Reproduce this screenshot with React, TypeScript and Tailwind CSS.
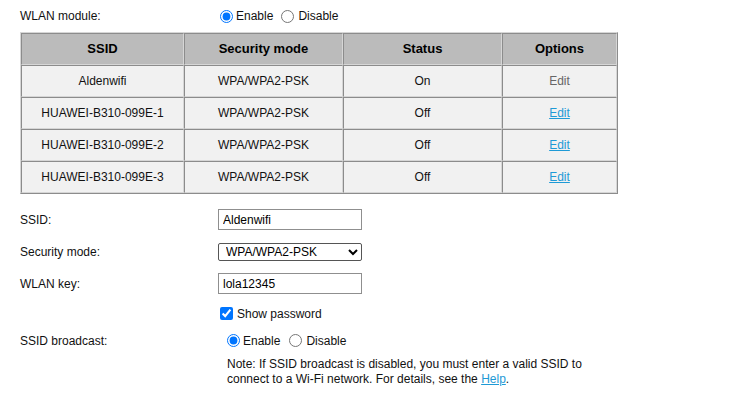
import React from "react";

const rows = [
  { ssid: "Aldenwifi", mode: "WPA/WPA2-PSK", status: "On", active: true },
  { ssid: "HUAWEI-B310-099E-1", mode: "WPA/WPA2-PSK", status: "Off", active: false },
  { ssid: "HUAWEI-B310-099E-2", mode: "WPA/WPA2-PSK", status: "Off", active: false },
  { ssid: "HUAWEI-B310-099E-3", mode: "WPA/WPA2-PSK", status: "Off", active: false },
];

const cell =
  "h-[32px] flex items-center justify-center border-t border-l border-t-[#8c8c8c] border-l-[#8c8c8c] border-r border-b border-r-[#d6d6d6] border-b-[#d6d6d6]";

export default function App() {
  return (
    <div
      className="w-[752px] h-[416px] bg-white text-[12px] text-[#111] overflow-hidden"
      style={{ fontFamily: '"Liberation Sans", Arial, sans-serif' }}
    >
      <div className="pl-[20px]">
        {/* WLAN module */}
        <div className="mt-[7px] h-[18px] flex items-center">
          <div className="w-[200px]">WLAN module:</div>
          <label className="flex items-center">
            <input type="radio" name="wlan" defaultChecked className="m-0 w-[13px] h-[13px] accent-[#0075ff]" />
            <span className="ml-[3px]">Enable</span>
          </label>
          <label className="flex items-center ml-[8px]">
            <input type="radio" name="wlan" className="m-0 w-[13px] h-[13px]" />
            <span className="ml-[4px]">Disable</span>
          </label>
        </div>

        {/* Table */}
        <div className="mt-[7px] inline-grid grid-cols-[163px_159px_159px_115px] border border-t-[#d6d6d6] border-l-[#d6d6d6] border-r-[#8c8c8c] border-b-[#8c8c8c]">
          {["SSID", "Security mode", "Status", "Options"].map((h) => (
            <div key={h} className={`${cell} bg-[#bbbbbb] font-bold text-[13px] text-black`}>
              {h}
            </div>
          ))}
          {rows.map((r) => (
            <React.Fragment key={r.ssid}>
              <div className={`${cell} bg-[#f1f1f1]`}>{r.ssid}</div>
              <div className={`${cell} bg-[#f1f1f1]`}>{r.mode}</div>
              <div className={`${cell} bg-[#f1f1f1]`}>{r.status}</div>
              <div className={`${cell} bg-[#f1f1f1]`}>
                {r.active ? (
                  <span className="text-[#666]">Edit</span>
                ) : (
                  <a href="#" className="text-[#1e9ad6] underline">
                    Edit
                  </a>
                )}
              </div>
            </React.Fragment>
          ))}
        </div>

        {/* SSID */}
        <div className="mt-[15px] h-[21px] flex items-center">
          <div className="w-[198px]">SSID:</div>
          <input
            type="text"
            defaultValue="Aldenwifi"
            className="w-[144px] h-[21px] border border-[#8f8f8f] px-[4px] text-[12px] text-black outline-none"
          />
        </div>

        {/* Security mode */}
        <div className="mt-[13px] h-[18px] flex items-center">
          <div className="w-[198px]">Security mode:</div>
          <select
            defaultValue="wpa"
            className="w-[144px] h-[18px] border border-[#555] rounded-[2px] pl-[3px] text-[12px] text-black bg-white"
          >
            <option value="wpa">WPA/WPA2-PSK</option>
            <option value="wpa2">WPA2-PSK</option>
            <option value="none">NONE</option>
          </select>
        </div>

        {/* WLAN key */}
        <div className="mt-[12px] h-[21px] flex items-center">
          <div className="w-[198px]">WLAN key:</div>
          <input
            type="text"
            defaultValue="lola12345"
            className="w-[144px] h-[21px] border border-[#8f8f8f] px-[4px] text-[12px] text-black outline-none"
          />
        </div>

        {/* Show password */}
        <div className="mt-[13px] h-[13px] flex items-center">
          <div className="w-[200px]" />
          <label className="flex items-center">
            <input type="checkbox" defaultChecked className="m-0 w-[13px] h-[13px] accent-[#0075ff]" />
            <span className="ml-[4px]">Show password</span>
          </label>
        </div>

        {/* SSID broadcast */}
        <div className="mt-[14px] h-[13px] flex items-center">
          <div className="w-[207px]">SSID broadcast:</div>
          <label className="flex items-center">
            <input type="radio" name="bc" defaultChecked className="m-0 w-[13px] h-[13px] accent-[#0075ff]" />
            <span className="ml-[3px]">Enable</span>
          </label>
          <label className="flex items-center ml-[9px]">
            <input type="radio" name="bc" className="m-0 w-[13px] h-[13px]" />
            <span className="ml-[4px]">Disable</span>
          </label>
        </div>

        {/* Note */}
        <div className="mt-[10px] flex">
          <div className="w-[207px]" />
          <p className="w-[370px] leading-[15px]">
            Note: If SSID broadcast is disabled, you must enter a valid SSID to connect to a Wi-Fi network. For
            details, see the{" "}
            <span className="whitespace-nowrap">
              <a href="#" className="text-[#1e9ad6] underline">
                Help
              </a>
              .
            </span>
          </p>
        </div>
      </div>
    </div>
  );
}
